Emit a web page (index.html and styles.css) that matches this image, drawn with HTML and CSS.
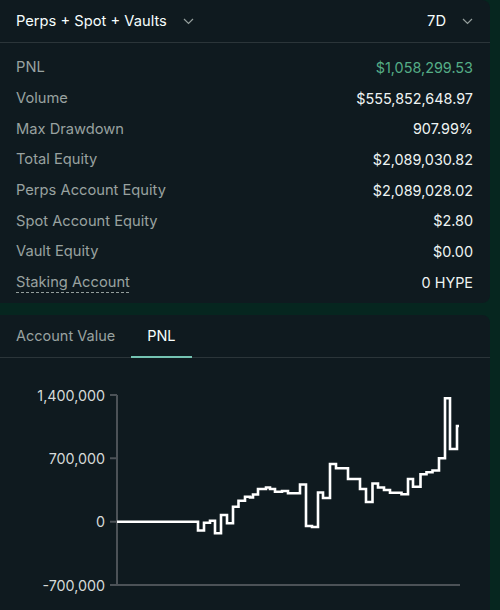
FILE: index.html
```html
<!DOCTYPE html>
<html>
<head>
<meta charset="utf-8">
<link rel="stylesheet" href="styles.css">
</head>
<body>
<div class="page">
  <section class="card summary">
    <header class="summary-head">
      <div class="select">
        <span class="select-label">Perps + Spot + Vaults</span>
        <svg class="chev" width="11" height="7" viewBox="0 0 11 7"><path d="M1 1 L5.5 5.5 L10 1" fill="none" stroke="#949e9c" stroke-width="1.2"/></svg>
      </div>
      <div class="select">
        <span class="select-label">7D</span>
        <svg class="chev" width="11" height="7" viewBox="0 0 11 7"><path d="M1 1 L5.5 5.5 L10 1" fill="none" stroke="#949e9c" stroke-width="1.2"/></svg>
      </div>
    </header>
    <div class="rows">
      <div class="row"><span class="label">PNL</span><span class="value green">$1,058,299.53</span></div>
      <div class="row"><span class="label">Volume</span><span class="value">$555,852,648.97</span></div>
      <div class="row"><span class="label">Max Drawdown</span><span class="value">907.99%</span></div>
      <div class="row"><span class="label">Total Equity</span><span class="value">$2,089,030.82</span></div>
      <div class="row"><span class="label">Perps Account Equity</span><span class="value">$2,089,028.02</span></div>
      <div class="row"><span class="label">Spot Account Equity</span><span class="value">$2.80</span></div>
      <div class="row"><span class="label">Vault Equity</span><span class="value">$0.00</span></div>
      <div class="row"><span class="label dashed">Staking Account</span><span class="value">0 HYPE</span></div>
    </div>
  </section>

  <section class="card chart-card">
    <nav class="tabs">
      <span class="tab">Account Value</span>
      <span class="tab active">PNL</span>
    </nav>
    <svg class="chart" width="490" height="252" viewBox="0 358 490 252">
      <g class="axis" stroke="#4c5257" stroke-width="2" fill="none">
        <path d="M117 395 V585 H460"/>
        <path d="M110 395 H117 M110 458.3 H117 M110 521.7 H117 M110 585 H117"/>
      </g>
      <g class="ticks" font-family="Inter, 'Noto Sans', sans-serif" font-size="14.3" fill="#d5d9d8" text-anchor="end" dominant-baseline="central">
        <text x="105" y="395">1,400,000</text>
        <text x="105" y="458.3">700,000</text>
        <text x="105" y="521.7">0</text>
        <text x="105" y="585">-700,000</text>
      </g>
      <path fill="none" stroke="#ffffff" stroke-width="2.6" stroke-linejoin="miter" d="M117,521.7 H198 V530.5 H204 V522.7 H210 V520.7 H215 V533.3 H221 V515 H227 V523.3 H233 V506.7 H238.5 V500.7 H245 V496.7 H250 V497.5 H253 V494.5 H258 V489 H266 V487.5 H270 V489 H275 V491.7 H282 V491 H288 V493.3 H300 V484.5 H306 V526 H312 V527 H318 V492.5 H323 V498 H330 V464 H336 V468.3 H348 V479 H360 V489 H366 V502 H372.5 V483.5 H378 V487.5 H384 V490 H390 V492.7 H401.5 V494.3 H408 V479 H413 V486.7 H420.5 V474.3 H426.5 V472.3 H432.5 V470.5 H439 V458.3 H445 V398.3 H450 V449 H457 V426 H459"/>
    </svg>
  </section>
</div>
</body>
</html>
```

FILE: styles.css
```css
* { box-sizing: border-box; }

html, body {
  margin: 0;
  padding: 0;
}

body {
  width: 500px;
  height: 610px;
  overflow: hidden;
  background: #06261f;
  font-family: Inter, "Noto Sans", sans-serif;
  color: #f6fefd;
}

.page {
  padding-right: 10px;
  display: flex;
  flex-direction: column;
}

.card {
  background: #0f1a1f;
}

.summary {
  height: 303px;
  border-radius: 0 8px 8px 0;
}

.summary-head {
  height: 43px;
  padding: 0 17px 0 16px;
  display: flex;
  align-items: center;
  justify-content: space-between;
  border-bottom: 1px solid #2b3539;
}

.select {
  display: flex;
  align-items: center;
  gap: 16px;
}

.select-label {
  font-size: 14.7px;
  color: #f6fefd;
}

.chev {
  display: block;
}

.rows {
  padding: 9px 17px 0 16px;
  display: flex;
  flex-direction: column;
}

.row {
  height: 30.7px;
  display: flex;
  align-items: center;
  justify-content: space-between;
}

.label {
  font-size: 14.7px;
  color: #99a2a0;
}

.label.dashed {
  text-decoration: underline dashed #949e9c;
  text-underline-offset: 5px;
  text-decoration-thickness: 1px;
}

.value {
  font-size: 14.4px;
  font-weight: 400;
  color: #eef4f3;
}

.value.green {
  color: #55ad86;
}

.chart-card {
  margin-top: 12px;
  height: 300px;
  border-radius: 0 8px 0 0;
}

.tabs {
  height: 43px;
  display: flex;
  border-bottom: 1px solid #2b3539;
}

.tab {
  padding: 0 16px;
  display: flex;
  align-items: center;
  font-size: 14.5px;
  color: #99a2a0;
  margin-bottom: -1px;
  border-bottom: 2px solid transparent;
}

.tab.active {
  color: #f6fefd;
  border-bottom-color: #74c3b2;
}

.chart {
  display: block;
}
```
